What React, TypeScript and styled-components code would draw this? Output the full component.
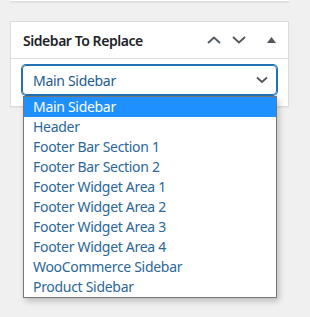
import styled, { createGlobalStyle } from "styled-components";

const GlobalStyle = createGlobalStyle`
  html, body {
    margin: 0;
    padding: 0;
    background: #f0f0f1;
    font-family: "Noto Sans", "Open Sans", sans-serif;
  }
`;

const Page = styled.div`
  width: 310px;
  height: 317px;
  overflow: hidden;
`;

const PrevBox = styled.div`
  margin: 0 21px 0 10px;
  height: 1px;
  background: #fff;
  border-bottom: 1px solid #dcdcde;
  box-shadow: 0 1px 2px rgba(0, 0, 0, 0.06);
`;

const Postbox = styled.div`
  margin: 19px 21px 0 10px;
  background: #fff;
  border: 1px solid #dcdcde;
  box-shadow: 0 1px 1px rgba(0, 0, 0, 0.04);
`;

const Header = styled.div`
  display: flex;
  align-items: center;
  height: 36px;
  padding: 0 2px 0 12px;
  border-bottom: 1px solid #dcdcde;
`;

const Title = styled.h2`
  flex: 1;
  margin: 0;
  font-size: 14px;
  font-weight: 600;
  color: #1d2327;
  letter-spacing: -0.45px;
`;

const Actions = styled.div`
  display: flex;
  align-items: center;
  gap: 4px;
`;

const IconButton = styled.span<{ $w?: number; $ml?: number }>`
  display: flex;
  align-items: center;
  justify-content: center;
  width: ${(p) => p.$w ?? 21}px;
  height: 24px;
  margin-left: ${(p) => p.$ml ?? 0}px;
  color: #50575e;
`;

const Inside = styled.div`
  padding: 6px 11px 11px;
  position: relative;
`;

const Select = styled.div`
  display: flex;
  align-items: center;
  height: 28px;
  padding: 0 8px 0 10px;
  border: 1px solid #2271b1;
  border-radius: 4px;
  box-shadow: 0 0 0 1px #2271b1;
  color: #1d5b8c;
  font-size: 14px;
  letter-spacing: -0.3px;
`;

const SelectValue = styled.span`
  flex: 1;
`;

const Dropdown = styled.ul`
  position: absolute;
  left: 12px;
  top: 37px;
  width: 252px;
  margin: 0;
  padding: 0;
  list-style: none;
  background: #fff;
  border: 1px solid #767676;
  box-shadow: 2px 3px 6px rgba(0, 0, 0, 0.22);
`;

const Option = styled.li<{ $active?: boolean }>`
  height: 20px;
  line-height: 20px;
  padding-left: 9px;
  font-size: 14px;
  letter-spacing: -0.3px;
  white-space: nowrap;
  background: ${(p) => (p.$active ? "#1e90ff" : "#fff")};
  color: ${(p) => (p.$active ? "#fff" : "#2b6797")};
`;

const options = [
  "Main Sidebar",
  "Header",
  "Footer Bar Section 1",
  "Footer Bar Section 2",
  "Footer Widget Area 1",
  "Footer Widget Area 2",
  "Footer Widget Area 3",
  "Footer Widget Area 4",
  "WooCommerce Sidebar",
  "Product Sidebar",
];

const Chevron = ({ up }: { up?: boolean }) => (
  <svg width="14" height="8" viewBox="0 0 14 8" fill="none">
    <path
      d={up ? "M1 7 L7 1.5 L13 7" : "M1 1 L7 6.5 L13 1"}
      stroke="currentColor"
      strokeWidth="1.8"
    />
  </svg>
);

export default function App() {
  return (
    <Page>
      <GlobalStyle />
      <PrevBox />
      <Postbox>
        <Header>
          <Title>Sidebar To Replace</Title>
          <Actions>
            <IconButton>
              <Chevron up />
            </IconButton>
            <IconButton>
              <Chevron />
            </IconButton>
            <IconButton $w={30} $ml={3}>
              <svg width="9" height="6" viewBox="0 0 9 6">
                <path d="M0 6 L4.5 0 L9 6 Z" fill="#50575e" />
              </svg>
            </IconButton>
          </Actions>
        </Header>
        <Inside>
          <Select>
            <SelectValue>Main Sidebar</SelectValue>
            <svg width="12" height="8" viewBox="0 0 12 8" fill="none">
              <path d="M1 1.5 L6 6 L11 1.5" stroke="#50575e" strokeWidth="1.8" />
            </svg>
          </Select>
          <Dropdown>
            {options.map((o, i) => (
              <Option key={o} $active={i === 0}>
                {o}
              </Option>
            ))}
          </Dropdown>
        </Inside>
      </Postbox>
    </Page>
  );
}
